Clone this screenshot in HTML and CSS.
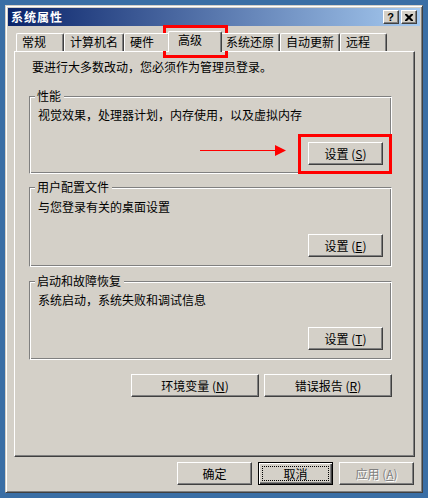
FILE: index.html
```html
<!DOCTYPE html>
<html lang="zh-CN">
<head>
<meta charset="utf-8">
<title>系统属性</title>
<link rel="stylesheet" href="styles.css">
</head>
<body>
<div class="window">
  <div class="titlebar">
    <span class="title">系统属性</span>
    <div class="tb-btns">
      <span class="tb-btn tb-help">?</span>
      <span class="tb-btn"><svg width="8" height="7" viewBox="0 0 8 7"><path d="M0 0h2l2 2 2-2h2v1l-2.5 2.5L8 6v1H6L4 5 2 7H0V6l2.5-2.5L0 1z" fill="#000"/></svg></span>
    </div>
  </div>
  <div class="content">
    <div class="tabs">
      <div class="tab t48">常规</div>
      <div class="tab t60">计算机名</div>
      <div class="tab t46">硬件</div>
      <div class="tab selected">高级</div>
      <div class="tab t60">系统还原</div>
      <div class="tab t60">自动更新</div>
      <div class="tab t47">远程</div>
    </div>
    <div class="panel">
      <p class="intro">要进行大多数改动，您必须作为管理员登录。</p>
      <div class="group g1">
        <span class="legend">性能</span>
        <p class="desc">视觉效果，处理器计划，内存使用，以及虚拟内存</p>
        <button class="btn">设置 (<u>S</u>)</button>
      </div>
      <div class="group g2">
        <span class="legend">用户配置文件</span>
        <p class="desc">与您登录有关的桌面设置</p>
        <button class="btn">设置 (<u>E</u>)</button>
      </div>
      <div class="group g3">
        <span class="legend">启动和故障恢复</span>
        <p class="desc">系统启动，系统失败和调试信息</p>
        <button class="btn">设置 (<u>T</u>)</button>
      </div>
      <div class="env-row">
        <button class="btn wide">环境变量 (<u>N</u>)</button>
        <button class="btn wide">错误报告 (<u>R</u>)</button>
      </div>
    </div>
    <div class="footer">
      <button class="btn">确定</button>
      <button class="btn default">取消</button>
      <button class="btn" disabled>应用 (<u>A</u>)</button>
    </div>
  </div>
</div>
<div class="mark mark-tab"></div>
<div class="mark mark-btn"></div>
<svg class="arrow" width="86" height="13" viewBox="0 0 86 13"><rect x="0" y="6" width="78" height="1" fill="#ff0000"/><polygon points="75,1 86,6.5 75,12" fill="#ff0000"/></svg>
</body>
</html>
```

FILE: styles.css
```css
html, body {
  margin: 0;
  padding: 0;
}
body {
  background: #3a6ea5;
  width: 428px;
  height: 498px;
  position: relative;
  overflow: hidden;
  font-family: "Noto Sans CJK SC", "Noto Sans", sans-serif;
  font-size: 12px;
  color: #000;
}
.window {
  margin: 5px 0 0 5px;
  width: 418px;
  height: 488px;
  box-sizing: border-box;
  background: #d4d0c8;
  border: 1px solid;
  border-color: #d4d0c8 #404040 #404040 #d4d0c8;
  box-shadow: inset 1px 1px #fff, inset -1px -1px #808080;
  padding: 2px;
  display: flex;
  flex-direction: column;
}
.titlebar {
  height: 18px;
  flex: none;
  background: linear-gradient(to right, #0a246a, #a6caf0);
  display: flex;
  align-items: center;
  justify-content: space-between;
  padding: 0 3px 0 3px;
}
.title {
  color: #fff;
  font-weight: bold;
  font-size: 12px;
  letter-spacing: 1px;
  line-height: 18px;
}
.tb-btns {
  display: flex;
  gap: 2px;
}
.tb-btn {
  width: 16px;
  height: 14px;
  box-sizing: border-box;
  background: #d4d0c8;
  border: 1px solid;
  border-color: #fff #404040 #404040 #fff;
  box-shadow: inset -1px -1px #808080;
  display: flex;
  align-items: center;
  justify-content: center;
}
.tb-help {
  font-family: "Liberation Sans", sans-serif;
  font-weight: bold;
  font-size: 11px;
  line-height: 12px;
  padding-right: 1px;
}
.content {
  padding: 0 5px 0 6px;
  display: flex;
  flex-direction: column;
  flex: 1;
}
.tabs {
  height: 25px;
  display: flex;
  align-items: flex-end;
  padding-left: 2px;
  position: relative;
  z-index: 1;
}
.tab {
  height: 18px;
  box-sizing: border-box;
  border-top: 1px solid #fff;
  border-left: 1px solid #fff;
  border-right: 1px solid #404040;
  box-shadow: inset -1px 0 #808080;
  border-radius: 2px 2px 0 0;
  padding-left: 5px;
  line-height: 16px;
  white-space: nowrap;
  background: #d4d0c8;
}
.t48 { width: 48px; }
.t60 { width: 60px; }
.t46 { width: 46px; }
.t47 { width: 47px; }
.tab.selected {
  width: 54px;
  height: 21px;
  margin: 0 -2px -1px -2px;
  padding-left: 9px;
  line-height: 16px;
  position: relative;
  z-index: 2;
}
.panel {
  height: 406px;
  box-sizing: border-box;
  border: 1px solid;
  border-color: #fff #404040 #404040 #fff;
  box-shadow: inset -1px -1px #808080;
  padding-left: 14px;
  flex: none;
}
.intro {
  margin: 8px 0 0 3px;
  line-height: 14px;
}
.group {
  position: relative;
  width: 363px;
  box-sizing: border-box;
  border: 1px solid;
  border-color: #808080 #fff #fff #808080;
  box-shadow: inset 1px 1px #fff, inset -1px -1px #808080;
  display: flex;
  flex-direction: column;
  padding: 11px 8px 9px 8px;
}
.g1 { margin-top: 22px; height: 78px; padding-bottom: 8px; }
.g2 { margin-top: 13px; height: 80px; padding-top: 12px; }
.g3 { margin-top: 14px; height: 79px; }
.legend {
  position: absolute;
  top: -8px;
  left: 5px;
  padding: 0 3px 0 2px;
  background: #d4d0c8;
  line-height: 14px;
}
.desc {
  margin: 0;
  line-height: 14px;
}
.btn {
  font-family: inherit;
  font-size: 12px;
  color: #000;
  width: 75px;
  height: 23px;
  box-sizing: border-box;
  background: #d4d0c8;
  border: 1px solid;
  border-color: #fff #404040 #404040 #fff;
  box-shadow: inset -1px -1px #808080;
  padding: 0;
  margin: 0;
  line-height: 20px;
  position: relative;
}
.btn u {
  text-decoration: underline;
}
.group .btn {
  margin-top: auto;
  align-self: flex-end;
}
.btn.wide {
  width: 128px;
}
.env-row {
  width: 363px;
  margin-top: 14px;
  display: flex;
  justify-content: flex-end;
  gap: 5px;
}
.footer {
  margin-top: 5px;
  display: flex;
  justify-content: flex-end;
  gap: 6px;
  padding-right: 1px;
}
.btn.default {
  border-color: #000;
  box-shadow: inset 1px 1px #fff, inset -1px -1px #404040, inset -2px -2px #808080;
}
.btn.default::after {
  content: "";
  position: absolute;
  left: 3px;
  top: 3px;
  right: 3px;
  bottom: 3px;
  border: 1px dotted #000;
}
.btn:disabled {
  color: #808080;
  text-shadow: 1px 1px #fff;
}
.mark {
  position: absolute;
  border: 3px solid #ff0000;
  box-sizing: border-box;
}
.mark-tab {
  left: 163px;
  top: 25px;
  width: 65px;
  height: 33px;
}
.mark-btn {
  left: 298px;
  top: 134px;
  width: 94px;
  height: 40px;
}
.arrow {
  position: absolute;
  left: 200px;
  top: 144px;
}
```
